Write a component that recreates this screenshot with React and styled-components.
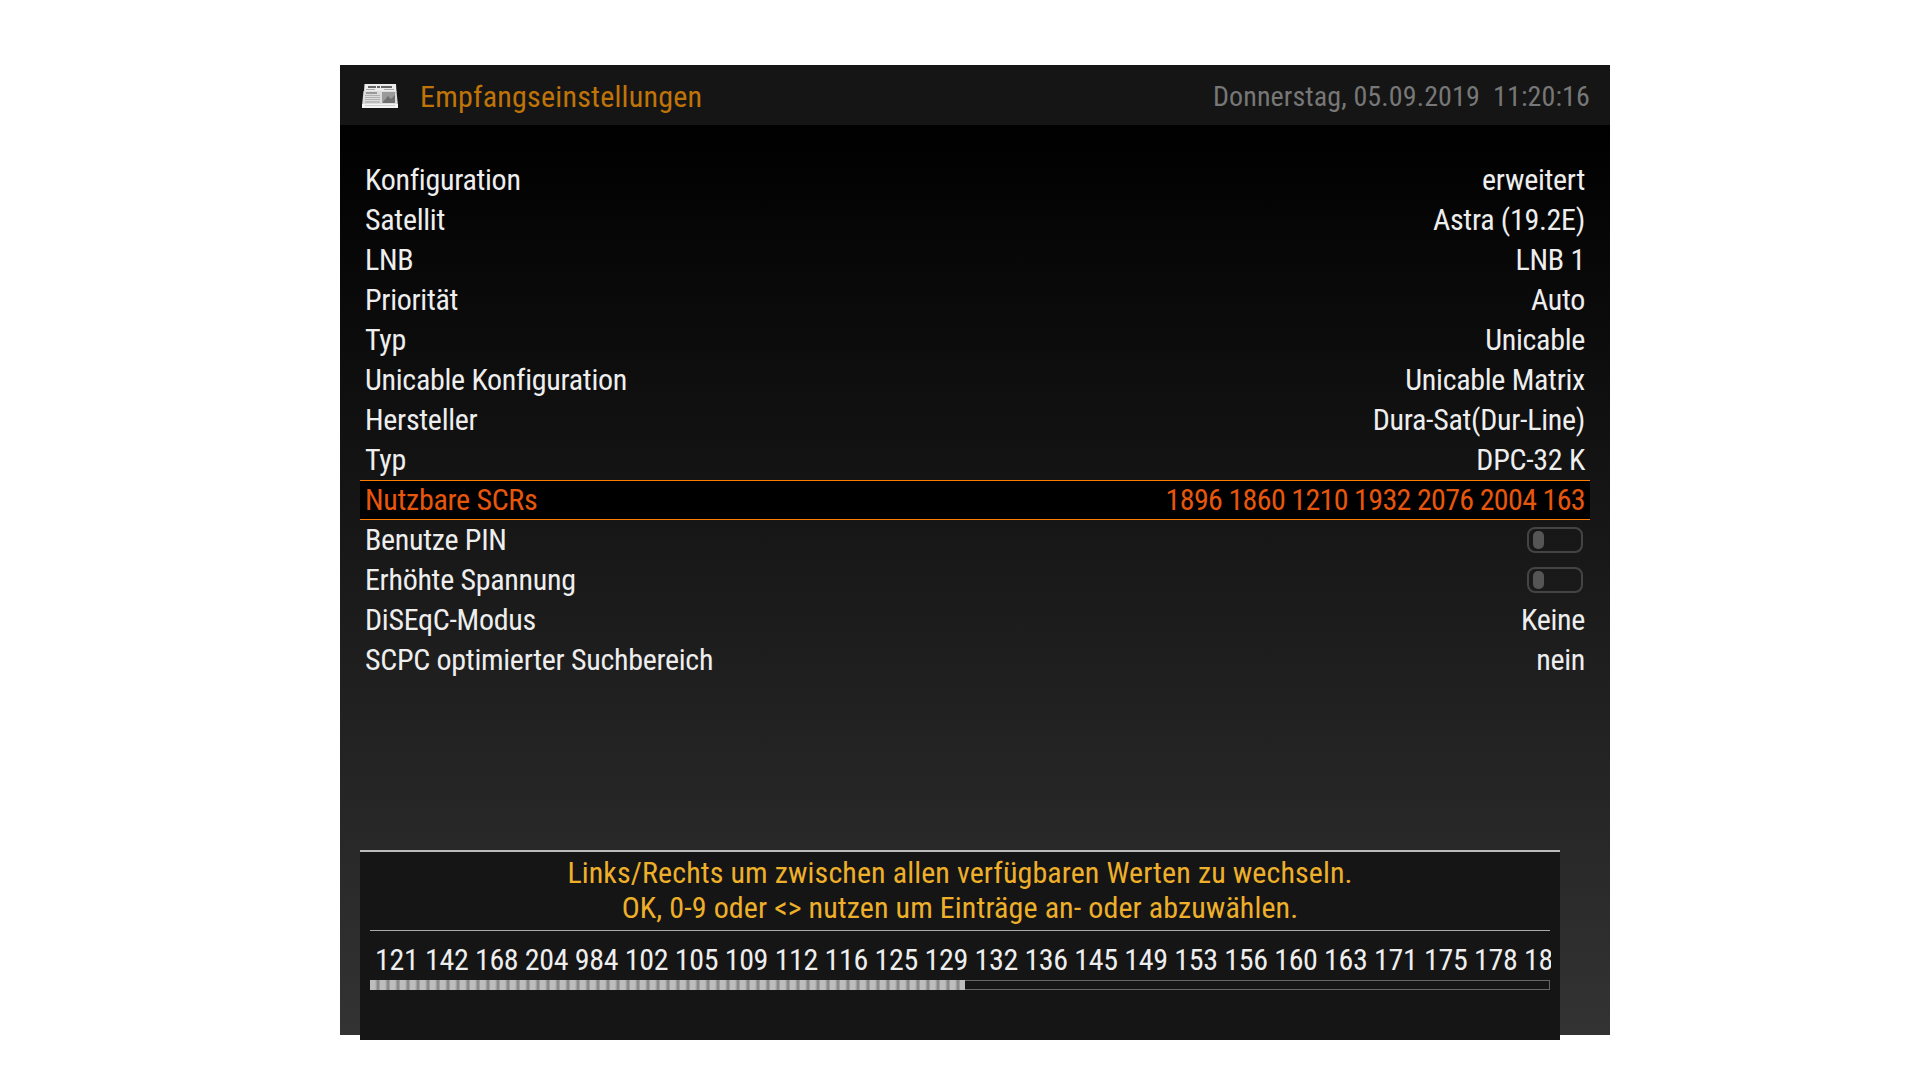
import React from 'react';
import styled, { createGlobalStyle } from 'styled-components';

const GlobalStyle = createGlobalStyle`
  html, body {
    margin: 0;
    background: #fff;
  }
`;

// the help panel hangs 5px below the gradient, so the gradient stops short of the box
const Screen = styled.div`
  width: 1270px;
  height: 975px;
  margin: 65px 0 0 340px;
  display: flex;
  flex-direction: column;
  background: linear-gradient(#000 6%, #333 100%) no-repeat;
  background-size: 100% 970px;
  font-family: Roboto, "Liberation Sans", sans-serif;
  font-stretch: condensed;
  font-size: 30px;
  color: #eee;
`;

const Header = styled.header`
  height: 60px;
  flex: none;
  box-sizing: border-box;
  display: flex;
  align-items: center;
  background: #151515;
  padding: 2px 20px 0 22px;
`;

const Title = styled.span`
  margin-left: 22px;
  color: #c07408;
  letter-spacing: 0.23px;
  flex: 1;
`;

const Clock = styled.span`
  color: #777;
  font-size: 28px;
  letter-spacing: 0.12px;
  white-space: pre;
`;

const List = styled.div`
  margin: 35px 20px 0;
  flex: 1;
`;

const Row = styled.div`
  height: 40px;
  box-sizing: border-box;
  padding: 0 5px 1px;
  display: flex;
  align-items: center;
  justify-content: space-between;
  white-space: nowrap;
  letter-spacing: -0.3px;
  ${(p) => p.$selected && `
    background: #000;
    color: #e6560c;
    border-top: 1px solid #ff7b00;
    border-bottom: 1px solid #ff7b00;
  `}
`;

const Value = styled.span`
  letter-spacing: ${(p) => (p.$selected ? '-0.66px' : 'inherit')};
`;

const Toggle = styled.div`
  width: 56px;
  height: 26px;
  box-sizing: border-box;
  margin-right: 2px;
  padding: 2px 4px;
  border: 2px solid #444;
  border-radius: 8px;
`;

const Knob = styled.div`
  width: 11px;
  height: 18px;
  border-radius: 5px;
  background: #555;
`;

const Help = styled.section`
  flex: none;
  width: 1200px;
  height: 190px;
  box-sizing: border-box;
  margin-left: 20px;
  padding: 0 10px;
  background: #151515;
  border-top: 2px solid #bbb;
`;

const HelpText = styled.div`
  height: 79px;
  box-sizing: border-box;
  padding-top: 3px;
  border-bottom: 1px solid #aaa;
  text-align: center;
  color: #eeb02a;
  letter-spacing: 0.1px;
  line-height: 35px;
`;

const Ticker = styled.div`
  height: 49px;
  box-sizing: border-box;
  margin-right: -1px;
  padding: 10px 0 0 5px;
  overflow: hidden;
  white-space: nowrap;
  letter-spacing: -0.34px;
  line-height: 38px;
`;

const Progress = styled.div`
  height: 10px;
  box-sizing: border-box;
  border: 1px solid #666;
`;

const ProgressFill = styled.div`
  height: 10px;
  margin: -1px 0 0 -1px;
  background: repeating-linear-gradient(90deg, #bdbdbd 0 5px, #a8a8a8 6px, #7f7f7f 8px, #a8a8a8 10px);
`;

const rows = [
  ['Konfiguration', 'erweitert'],
  ['Satellit', 'Astra (19.2E)'],
  ['LNB', 'LNB 1'],
  ['Priorität', 'Auto'],
  ['Typ', 'Unicable'],
  ['Unicable Konfiguration', 'Unicable Matrix'],
  ['Hersteller', 'Dura-Sat(Dur-Line)'],
  ['Typ', 'DPC-32 K'],
  ['Nutzbare SCRs', '1896 1860 1210 1932 2076 2004 163', true],
  ['Benutze PIN', null],
  ['Erhöhte Spannung', null],
  ['DiSEqC-Modus', 'Keine'],
  ['SCPC optimierter Suchbereich', 'nein'],
];

const ticker = '121 142 168 204 984 102 105 109 112 116 125 129 132 136 145 149 153 156 160 163 171 175 178 182';

function NewsIcon() {
  return (
    <svg width="36" height="24" viewBox="0 0 36 24">
      <path d="M2 8 L2.5 0 H34 L34.5 8 Z" fill="#ececec" />
      <path d="M1.5 7 H34.5 L36 22 H0 Z" fill="#dcdcdc" />
      <path d="M0 20 H36 V24 H0 Z" fill="#f4f4f4" />
      <rect x="6" y="2" width="8" height="2" fill="#666" />
      <rect x="15" y="2" width="3" height="2" fill="#666" />
      <rect x="19" y="2" width="11" height="2" fill="#666" />
      <rect x="4" y="5" width="9" height="1" fill="#aaa" />
      <rect x="22" y="5" width="10" height="1" fill="#aaa" />
      <rect x="4" y="8" width="11" height="2" fill="#999" />
      <rect x="3" y="11" width="15" height="1" fill="#b0b0b0" />
      <rect x="3" y="13" width="15" height="1" fill="#b0b0b0" />
      <rect x="3" y="15" width="15" height="1" fill="#b0b0b0" />
      <rect x="3" y="17" width="15" height="2" fill="#bcbcbc" />
      <rect x="20" y="8" width="13" height="11" fill="#9a9a9a" />
      <path d="M21 18 L26 12 L29 15 L33 11 V19 H21 Z" fill="#707070" />
      <rect x="3" y="21" width="30" height="1" fill="#cfcfcf" />
    </svg>
  );
}

export default function App() {
  return (
    <>
      <GlobalStyle />
      <Screen>
        <Header>
          <NewsIcon />
          <Title>Empfangseinstellungen</Title>
          <Clock>Donnerstag, 05.09.2019  11:20:16</Clock>
        </Header>
        <List>
          {rows.map(([label, value, selected]) => (
            <Row key={label + value} $selected={selected}>
              <span>{label}</span>
              {value ? <Value $selected={selected}>{value}</Value> : <Toggle><Knob /></Toggle>}
            </Row>
          ))}
        </List>
        <Help>
          <HelpText>
            Links/Rechts um zwischen allen verfügbaren Werten zu wechseln.
            <br />
            OK, 0-9 oder &lt;&gt; nutzen um Einträge an- oder abzuwählen.
          </HelpText>
          <Ticker>{ticker}</Ticker>
          <Progress>
            <ProgressFill style={{ width: `${(596 / 1180) * 100}%` }} />
          </Progress>
        </Help>
      </Screen>
    </>
  );
}
